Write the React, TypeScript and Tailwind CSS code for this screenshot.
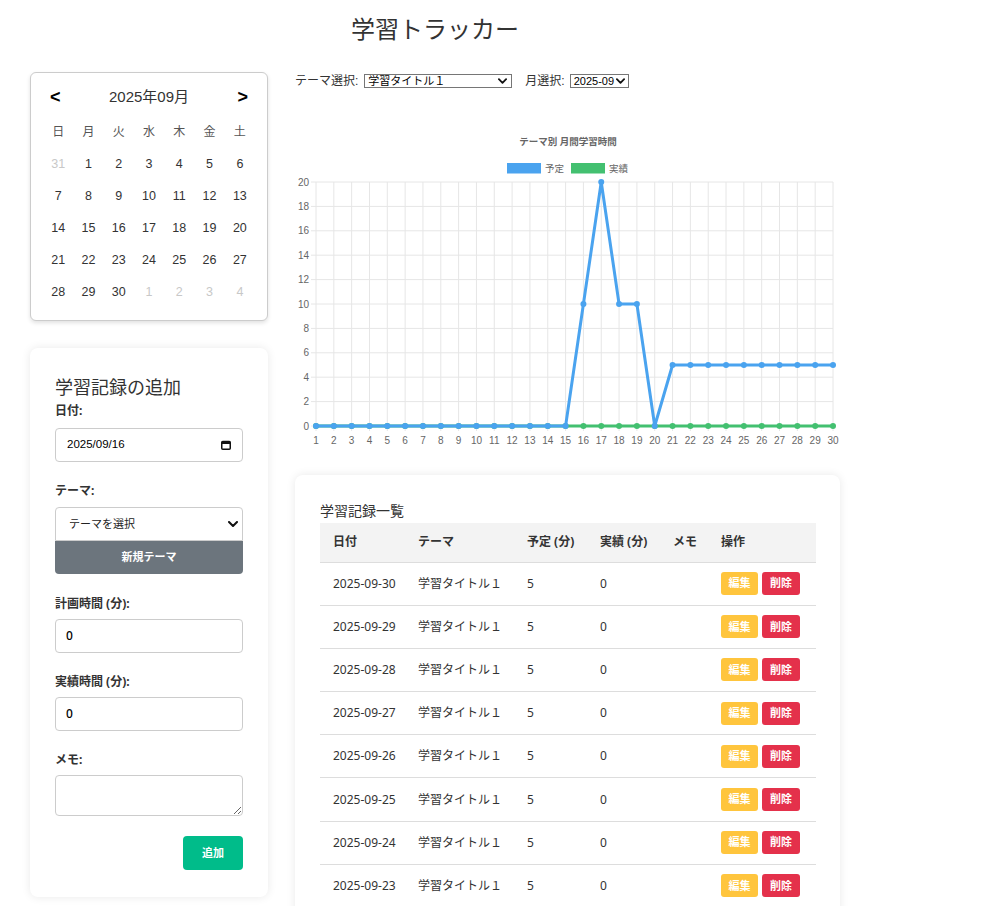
import React from "react";

const calDays: { d: number; other?: boolean }[] = [
  { d: 31, other: true },
  ...Array.from({ length: 30 }, (_, i) => ({ d: i + 1 })),
  { d: 1, other: true },
  { d: 2, other: true },
  { d: 3, other: true },
  { d: 4, other: true },
];

const weekdays = ["日", "月", "火", "水", "木", "金", "土"];

const plan = [0, 0, 0, 0, 0, 0, 0, 0, 0, 0, 0, 0, 0, 0, 0, 10, 20, 10, 10, 0, 5, 5, 5, 5, 5, 5, 5, 5, 5, 5];
const actual = Array.from({ length: 30 }, () => 0);

const records = [
  { date: "2025-09-30", plan: 5 },
  { date: "2025-09-29", plan: 5 },
  { date: "2025-09-28", plan: 5 },
  { date: "2025-09-27", plan: 5 },
  { date: "2025-09-26", plan: 5 },
  { date: "2025-09-25", plan: 5 },
  { date: "2025-09-24", plan: 5 },
  { date: "2025-09-23", plan: 5 },
];

const X0 = 21;
const X1 = 538;
const Y0 = 338;
const YT = 94;
const px = (i: number) => X0 + (i * (X1 - X0)) / 29;
const py = (v: number) => Y0 - (v * (Y0 - YT)) / 20;

function Chevron({ className }: { className?: string }) {
  return (
    <svg viewBox="0 0 10 6" className={className}>
      <path d="M1 1 L5 5 L9 1" fill="none" stroke="#111" strokeWidth="2" strokeLinecap="round" strokeLinejoin="round" />
    </svg>
  );
}

function Calendar() {
  return (
    <div className="rounded-[6px] border border-[#cccccc] bg-white px-[12px] pb-[12px] pt-[12px] shadow-[0_2px_4px_rgba(0,0,0,0.12)]">
      <div className="flex h-[24px] items-center justify-between px-[7px]">
        <span className="text-[18px] font-bold text-black">&lt;</span>
        <span className="text-[15px] text-[#333]">2025年09月</span>
        <span className="text-[18px] font-bold text-black">&gt;</span>
      </div>
      <div className="mt-[7px] grid grid-cols-7">
        {weekdays.map((w) => (
          <div key={w} className="flex h-[32px] items-center justify-center text-[12px] text-[#555]">
            {w}
          </div>
        ))}
        {calDays.map((c, i) => (
          <div
            key={i}
            className={`flex h-[32px] items-center justify-center text-[12.5px] ${c.other ? "text-[#c8c8c8]" : "text-[#333]"}`}
          >
            {c.d}
          </div>
        ))}
      </div>
    </div>
  );
}

function AddForm() {
  return (
    <div className="rounded-[8px] bg-white px-[25px] pb-[27px] pt-[28px] shadow-[0_0_10px_rgba(0,0,0,0.09)] font-['Noto_Sans','Noto_Sans_CJK_JP',sans-serif]">
      <h2 className="text-[18px] leading-[23px] text-[#333]">学習記録の追加</h2>

      <label className="mt-[3px] block text-[12px] font-bold leading-[17px] text-[#333]">日付:</label>
      <div className="mt-[9px] flex h-[34px] items-center justify-between rounded-[4px] border border-[#cccccc] pl-[11px] pr-[11px]">
        <span className="text-[11.5px] text-black font-['Liberation_Sans',sans-serif]">2025/09/16</span>
        <svg viewBox="0 0 10 10" className="h-[10px] w-[10px]">
          <rect x="0.75" y="1.5" width="8.5" height="7.75" rx="1" fill="none" stroke="#111" strokeWidth="1.5" />
          <rect x="0.75" y="1.5" width="8.5" height="2.5" fill="#111" />
        </svg>
      </div>

      <label className="mt-[20px] block text-[12px] font-bold leading-[17px] text-[#333]">テーマ:</label>
      <div className="mt-[8px] flex h-[34px] items-center justify-between rounded-t-[4px] border border-[#cccccc] pl-[13px] pr-[4px]">
        <span className="text-[11px] text-[#222]">テーマを選択</span>
        <Chevron className="h-[6px] w-[10px]" />
      </div>
      <div className="flex h-[33px] items-center justify-center rounded-b-[4px] bg-[#6c757d] text-[11px] font-bold text-white">
        新規テーマ
      </div>

      <label className="mt-[21px] block text-[12px] font-bold leading-[17px] text-[#333]">計画時間 (分):</label>
      <div className="mt-[7px] flex h-[34px] items-center rounded-[4px] border border-[#cccccc] pl-[10px]">
        <span className="text-[12px] font-medium text-black">0</span>
      </div>

      <label className="mt-[20px] block text-[12px] font-bold leading-[17px] text-[#333]">実績時間 (分):</label>
      <div className="mt-[7px] flex h-[34px] items-center rounded-[4px] border border-[#cccccc] pl-[10px]">
        <span className="text-[12px] font-medium text-black">0</span>
      </div>

      <label className="mt-[20px] block text-[12px] font-bold leading-[17px] text-[#333]">メモ:</label>
      <textarea className="mt-[7px] block h-[41px] w-full rounded-[4px] border border-[#cccccc] px-[10px] text-[12px]" />

      <div className="mt-[20px] flex justify-end">
        <div className="flex h-[34px] w-[60px] items-center justify-center rounded-[4px] bg-[#00bc8a] text-[11px] font-bold text-white">
          追加
        </div>
      </div>
    </div>
  );
}

function Chart() {
  const planPts = plan.map((v, i) => `${px(i)},${py(v)}`).join(" ");
  const actPts = actual.map((v, i) => `${px(i)},${py(v)}`).join(" ");
  const font = "'Liberation Sans','Noto Sans CJK JP',sans-serif";
  return (
    <svg width="545" height="387" viewBox="0 0 545 387" className="block">
      <text x="273" y="57" textAnchor="middle" fontSize="9.5" fontWeight="bold" fill="#666" fontFamily={font}>
        テーマ別 月間学習時間
      </text>
      <rect x="212.5" y="75.5" width="33" height="9.5" fill="#4aa3ef" stroke="#4aa3ef" />
      <text x="250" y="84" fontSize="9.5" fill="#666" fontFamily={font}>予定</text>
      <rect x="276.5" y="75.5" width="33" height="9.5" fill="#43c070" stroke="#43c070" />
      <text x="314" y="84" fontSize="9.5" fill="#666" fontFamily={font}>実績</text>

      {Array.from({ length: 11 }, (_, k) => (
        <g key={`h${k}`}>
          <line x1={16} x2={X1} y1={py(k * 2)} y2={py(k * 2)} stroke="#e6e6e6" strokeWidth="1" />
          <text x="14" y={py(k * 2) + 3.5} textAnchor="end" fontSize="10" fill="#666" fontFamily={font}>
            {k * 2}
          </text>
        </g>
      ))}
      {plan.map((_, i) => (
        <g key={`v${i}`}>
          <line x1={px(i)} x2={px(i)} y1={YT} y2={Y0 + 5} stroke="#e6e6e6" strokeWidth="1" />
          <text x={px(i)} y="356" textAnchor="middle" fontSize="10" fill="#666" fontFamily={font}>
            {i + 1}
          </text>
        </g>
      ))}

      <polyline points={actPts} fill="none" stroke="#43c070" strokeWidth="3" strokeLinejoin="round" />
      {actual.map((v, i) => (
        <circle key={`a${i}`} cx={px(i)} cy={py(v)} r="3" fill="#43c070" />
      ))}
      <polyline points={planPts} fill="none" stroke="#4aa3ef" strokeWidth="3" strokeLinejoin="round" />
      {plan.map((v, i) => (
        <circle key={`p${i}`} cx={px(i)} cy={py(v)} r="3" fill="#4aa3ef" />
      ))}
    </svg>
  );
}

function RecordTable() {
  return (
    <div className="rounded-[8px] bg-white px-[25px] pt-[26px] pb-[30px] shadow-[0_0_10px_rgba(0,0,0,0.09)] font-['Noto_Sans','Noto_Sans_CJK_JP',sans-serif]">
      <h3 className="text-[14px] leading-[20px] text-[#333]">学習記録一覧</h3>
      <table className="mt-[2px] w-[496px] table-fixed text-[12px] text-[#333]">
        <colgroup>
          <col className="w-[86px]" />
          <col className="w-[109px]" />
          <col className="w-[73px]" />
          <col className="w-[73px]" />
          <col className="w-[48px]" />
          <col className="w-[107px]" />
        </colgroup>
        <thead>
          <tr className="h-[39px] border-b border-[#dddddd] bg-[#f3f3f3] text-left">
            <th className="pl-[13px] font-bold">日付</th>
            <th className="pl-[12px] font-bold">テーマ</th>
            <th className="pl-[12px] font-bold">予定 (分)</th>
            <th className="pl-[12px] font-bold">実績 (分)</th>
            <th className="pl-[12px] font-bold">メモ</th>
            <th className="pl-[12px] font-bold">操作</th>
          </tr>
        </thead>
        <tbody>
          {records.map((r) => (
            <tr key={r.date} className="h-[43.2px] border-b border-[#dddddd]">
              <td className="pl-[13px]">{r.date}</td>
              <td className="pl-[12px]">学習タイトル１</td>
              <td className="pl-[12px]">{r.plan}</td>
              <td className="pl-[12px]">0</td>
              <td className="pl-[12px]"></td>
              <td className="pl-[12px]">
                <div className="flex gap-[4px]">
                  <span className="flex h-[23px] w-[37px] items-center justify-center rounded-[3px] bg-[#ffc53d] text-[11px] font-bold text-white">
                    編集
                  </span>
                  <span className="flex h-[23px] w-[38px] items-center justify-center rounded-[3px] bg-[#e4314b] text-[11px] font-bold text-white">
                    削除
                  </span>
                </div>
              </td>
            </tr>
          ))}
        </tbody>
      </table>
    </div>
  );
}

export default function App() {
  return (
    <div className="min-h-screen bg-white font-['Liberation_Sans','Noto_Sans_CJK_JP',sans-serif] text-[#333]">
      <div className="ml-[30px] w-[810px] pb-[40px]">
        <h1 className="pt-[12px] text-center text-[24px] leading-[32px] text-[#333] font-['Noto_Sans_CJK_JP',sans-serif]">
          学習トラッカー
        </h1>
        <div className="mt-[28px] flex gap-[27px]">
          <div className="flex w-[238px] shrink-0 flex-col gap-[27px]">
            <Calendar />
            <AddForm />
          </div>
          <div className="flex w-[545px] flex-col">
            <div className="mt-[2px] flex h-[14px] items-center text-[12px] text-[#333]">
              <span>テーマ選択:</span>
              <div className="ml-[6px] flex h-[14px] w-[148px] items-center justify-between border border-[#767676] pl-[3px] pr-[4px] text-[11px] text-black">
                <span>学習タイトル１</span>
                <Chevron className="h-[6px] w-[9px]" />
              </div>
              <span className="ml-[13px]">月選択:</span>
              <div className="ml-[5px] flex h-[14px] w-[59px] items-center justify-between border border-[#767676] pl-[3px] pr-[3px] text-[11px] text-black">
                <span>2025-09</span>
                <Chevron className="h-[6px] w-[9px]" />
              </div>
            </div>
            <Chart />
            <RecordTable />
          </div>
        </div>
      </div>
    </div>
  );
}
